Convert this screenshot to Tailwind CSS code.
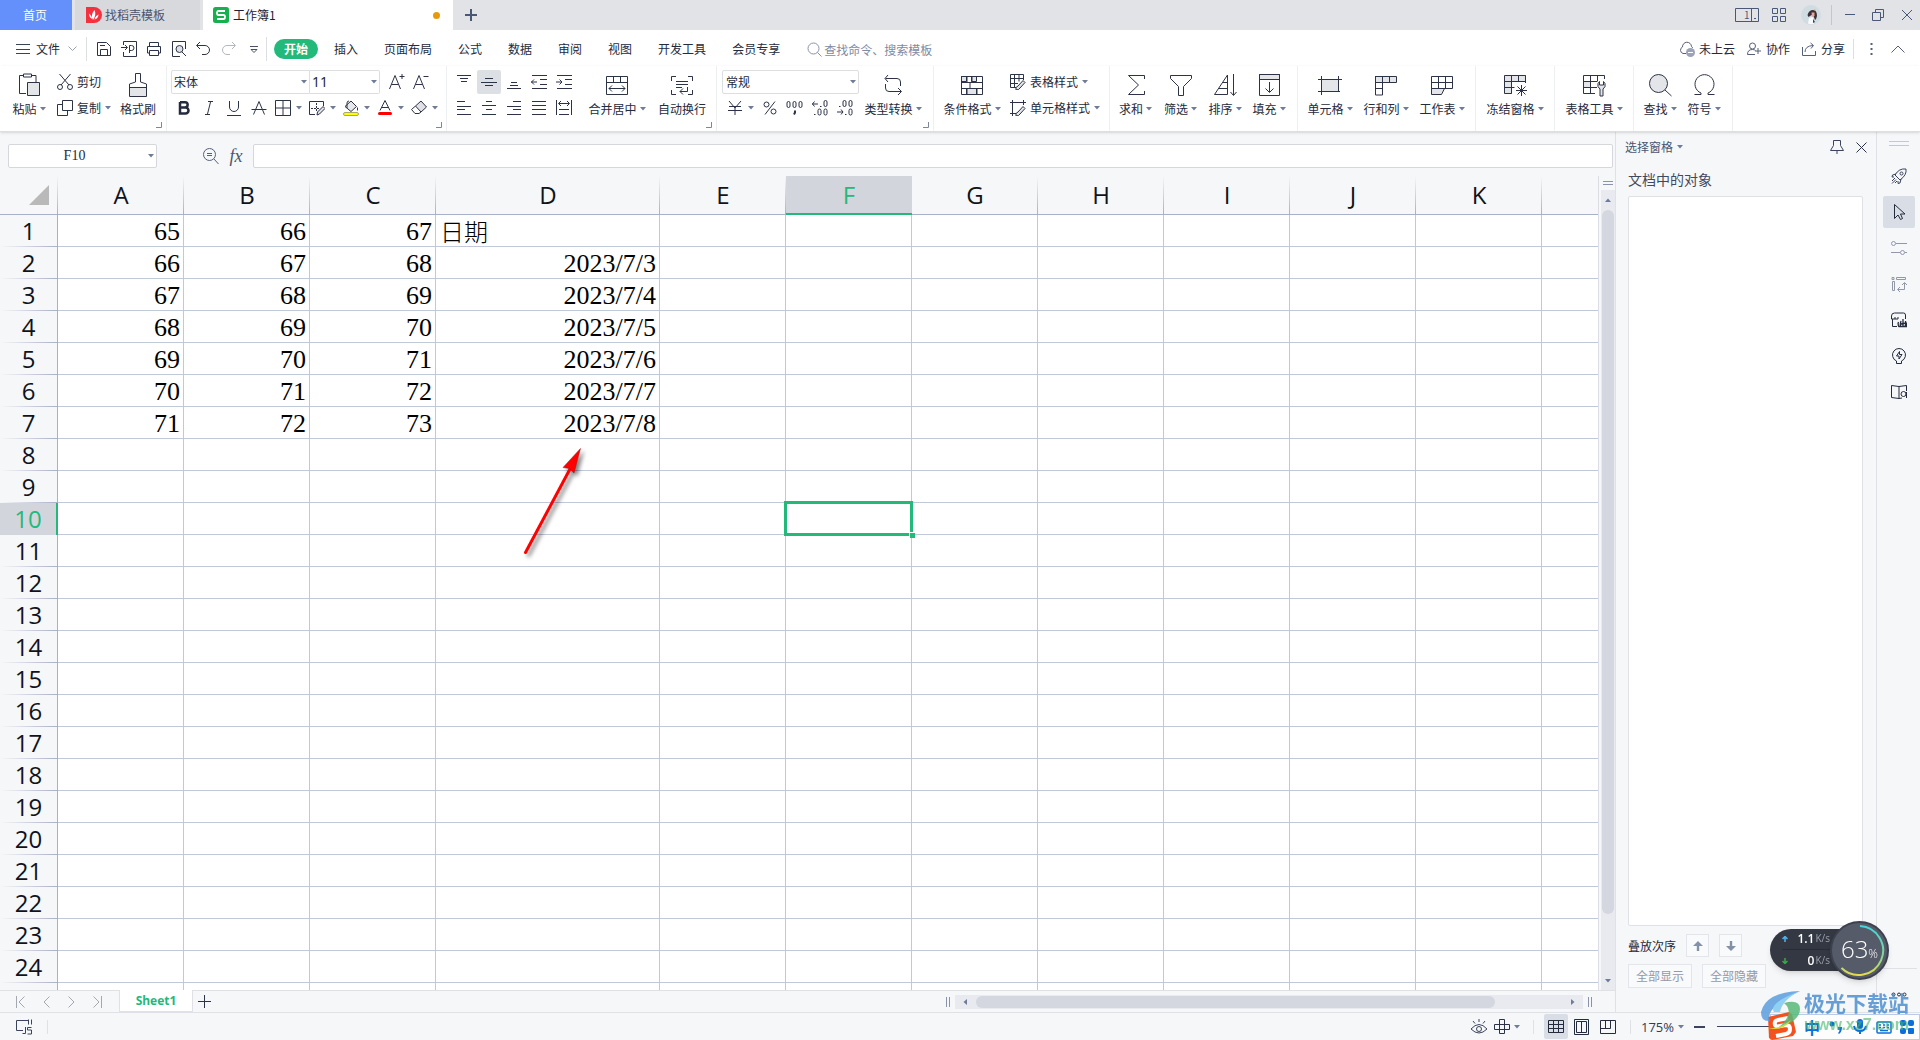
<!DOCTYPE html>
<html lang="zh-CN">
<head>
<meta charset="utf-8">
<title>工作簿1</title>
<script src="https://cdn.jsdelivr.net/npm/@tailwindcss/browser@4"></script>
</head>
<body class="h-screen flex flex-col overflow-hidden bg-[#f6f7f9] text-[#242b3d] text-xs leading-4 font-['Noto_Sans_CJK_SC',sans-serif]">

<svg class="hidden">
  <symbol id="caret" viewBox="0 0 6 4"><path d="M0 0h6L3 3.5z" fill="#6f7c98"/></symbol>
  <symbol id="corner" viewBox="0 0 6 6"><path d="M5.500 0v5.500H0" fill="none" stroke="#7d869c"/></symbol>
</svg>

<!-- Title bar -->
<header class="h-[30px] shrink-0 flex bg-[#e2e3e7] text-[#4a5570]">
  <button class="w-[72px] pr-[2px] bg-[#6390fb] text-white">首页</button>
  <button class="w-[125px] ml-[3px] pl-[11px] bg-[#d8d9dd] flex items-center gap-[3px]">
    <svg class="size-4" viewBox="0 0 16 16"><path d="M0 0h8a8 8 0 0 1 0 16H0z" fill="#f5303f"/><path d="M7 13C5 9 6 6 8.500 3c1.500 3 1 7-1.500 10zM6 12C4 11 3 9 3 6.500 5 8 6 10 6 12zM8.500 12.500c.5-2.500 2-4 4-5 0 3-2 4.500-4 5z" fill="#fff"/></svg>
    找稻壳模板
  </button>
  <button class="w-[250px] ml-[3px] pl-[10px] pr-[13px] bg-white flex items-center gap-1 text-[#1c2233]">
    <svg class="size-4" viewBox="0 0 16 16"><rect width="16" height="16" rx="2.500" fill="#17b04f"/><path d="M12 4H5.500Q4 4 4 6t1.500 2h5q1.500 0 1.500 2t-1.500 2H4" fill="none" stroke="#fff" stroke-width="1.800"/></svg>
    工作簿1
    <span class="ml-auto size-[7px] rounded-full bg-[#e69a0b]"></span>
  </button>
  <button class="w-9 flex items-center justify-center" aria-label="新建"><svg class="size-3" viewBox="0 0 12 12"><path d="M6 0v12M0 6h12" stroke="#4a5878" stroke-width="2"/></svg></button>
  <div class="ml-auto flex items-center pr-[7px]">
    <svg class="w-6 h-[14px]" viewBox="0 0 24 14" fill="none" stroke="#4a5878"><path d="M.5.500h23v13H.500zM16.500.500v13"/><path d="M19 10.500h2"/><text x="9" y="11" font-size="10" fill="#4a5878" stroke="none">1</text></svg>
    <svg class="size-[14px] ml-[13px]" viewBox="0 0 14 14" fill="none" stroke="#4a5878"><path d="M.5.500h5v5h-5zM8.500.500h5v5h-5zM.5 8.500h5v5h-5zM8.500 8.500h5v5h-5z"/></svg>
    <svg class="size-5 ml-[15px]" viewBox="0 0 20 20"><circle cx="10" cy="10" r="10" fill="#cfdde2"/><path d="M6.500 10q1.500-5 5.500-5 4 0 4 6-.5 3-2 4l-1.500-4-2-1-3 2z" fill="#3d3038"/><path d="M10.500 7.500h3V11l-2.500 1z" fill="#e2a79d"/><path d="M13 4.500l2 1" stroke="#e8b650"/><path d="M8 13l4-1 1 6.500q-3 1.500-6 0z" fill="#f7f9fb"/><path d="M12 14l2 3-2 1z" fill="#3d3c58"/></svg>
    <span class="w-px h-5 bg-[#c3c6cf] ml-[10px]"></span>
    <svg class="size-3 ml-3" viewBox="0 0 12 12"><path d="M1 5.500h10" stroke="#4a5878"/></svg>
    <svg class="size-3 ml-4" viewBox="0 0 12 12" fill="none" stroke="#4a5878"><path d="M.5 3.500h8v8h-8zM3.500 3V.500h8v8H9"/></svg>
    <svg class="size-3 ml-[17px]" viewBox="0 0 12 12"><path d="M1 1l10 10M11 1L1 11" stroke="#4a5878"/></svg>
  </div>
</header>

<!-- Menu bar -->
<nav class="h-9 shrink-0 pt-[2px] flex items-center bg-white pl-4 pr-[15px]">
  <svg class="w-[14px] h-[10px]" viewBox="0 0 14 10"><path d="M0 .500h14M0 5.500h14M0 9.500h14" stroke="#3c4356"/></svg>
  <button class="ml-[6px] flex items-center gap-2">文件 <svg class="w-[9px] h-[6px]" viewBox="0 0 9 6"><path d="M.5.500l4 4 4-4" fill="none" stroke="#9aa0ae"/></svg></button>
  <span class="w-px h-6 bg-[#dcdee3] ml-[9px]"></span>
  <div class="flex items-center pl-[9px] gap-[9px]">
    <svg class="size-4" viewBox="0 0 16 16" fill="none" stroke="#2c3346"><path d="M1.500 1.500h9l4 4v9h-13zM4.500 14V8.500h7V14M4 4.500h5"/></svg>
    <svg class="size-4" viewBox="0 0 16 16" fill="none" stroke="#2c3346"><path d="M2.500 4V.500h13v15h-13V11M0 6.500h6M4 4l2.500 2.500L4 9M8.500 12V4.500h2a2.500 2.500 0 0 1 0 5h-2"/></svg>
    <svg class="size-4" viewBox="0 0 16 16" fill="none" stroke="#2c3346"><path d="M3.500 5V1.500h9V5M3.500 12h-2V5.500h13V12h-2M3.500 9.500h9v5h-9z"/></svg>
    <svg class="size-4" viewBox="0 0 16 16" fill="none" stroke="#2c3346"><path d="M9 15.500H1.500V.500h13V8"/><circle cx="8.500" cy="8" r="3.500" fill="#dfe1e6"/><path d="M11 11l4 4"/></svg>
    <svg class="size-4" viewBox="0 0 16 16" fill="none" stroke="#2c3346"><path d="M4 1L.500 4.500 4 8M1 4.500h8a4.500 4.500 0 0 1 0 9H6"/></svg>
    <svg class="size-4" viewBox="0 0 16 16" fill="none" stroke="#b3b7c0"><path d="M11 1l3.500 3.500L11 8M14 4.500H6a4.500 4.500 0 0 0 0 9h3"/></svg>
    <svg class="size-4" viewBox="0 0 16 16" fill="none" stroke="#4a5265"><path d="M4 5.500h8M5 8.500l3 3 3-3z"/></svg>
  </div>
  <span class="w-px h-6 bg-[#dcdee3] ml-1"></span>
  <div class="flex items-center gap-[3px] ml-[7px]">
    <button class="h-5 w-11 rounded-full bg-[#22b97b] text-white font-bold">开始</button>
    <button class="px-[13px]">插入</button>
    <button class="pl-[10px] pr-[13px]">页面布局</button>
    <button class="px-[10px]">公式</button>
    <button class="px-[13px]">数据</button>
    <button class="px-[10px]">审阅</button>
    <button class="px-[13px]">视图</button>
    <button class="px-[10px]">开发工具</button>
    <button class="px-[13px]">会员专享</button>
  </div>
  <label class="flex items-center gap-[2px] ml-[14px]">
    <svg class="size-[15px]" viewBox="0 0 15 15" fill="none" stroke="#8a93a8"><circle cx="6.500" cy="6.500" r="5.500"/><path d="M10.500 10.500l4 4"/></svg>
    <input class="w-32 h-5 outline-none placeholder-[#7f8aa3]" placeholder="查找命令、搜索模板" aria-label="查找命令">
  </label>
  <div class="ml-auto flex items-center">
    <button class="flex items-center gap-1"><svg class="size-4" viewBox="0 0 16 16" fill="none" stroke="#56607a"><path d="M7 12.500H4A3.500 3.500 0 0 1 3.500 6a4.500 4.500 0 0 1 9-.5q1 .500 1 1.500"/><circle cx="11.500" cy="11.500" r="4.500" fill="#9aa3ba" stroke="none"/><path d="M9 11.500h5" stroke="#fff"/></svg>未上云</button>
    <button class="flex items-center gap-[5px] ml-3"><svg class="size-[14px]" viewBox="0 0 14 14" fill="none" stroke="#56607a"><circle cx="5.500" cy="4" r="3"/><path d="M8 12.500H.500q0-5 5-5 2 0 3 1M11 6v6M8 9h6"/></svg>协作</button>
    <button class="flex items-center gap-[5px] ml-3"><svg class="size-[14px]" viewBox="0 0 14 14" fill="none" stroke="#56607a"><path d="M.5 5v8.500h13V9M3 10q0-6 8-6.500M8.500 1L11.500 3.500 9 6.500"/></svg>分享</button>
    <span class="w-px h-5 bg-[#dcdee3] ml-2"></span>
    <svg class="w-[3px] h-3 ml-4" viewBox="0 0 3 12" fill="#56607a"><path d="M.5 0h2v2h-2zM.5 5h2v2h-2zM.5 10h2v2h-2z"/></svg>
    <svg class="w-[14px] h-2 ml-[18px]" viewBox="0 0 14 8"><path d="M.5 7.500L7 1l6.500 6.500" fill="none" stroke="#56607a"/></svg>
  </div>
</nav>

<!-- Ribbon -->
<section class="h-[66px] shrink-0 flex items-stretch bg-white border-b border-[#dcdee2] shadow-sm relative">
  <div class="w-[167px] relative border-r border-[#eeeff1] flex pt-[3px] pl-[11px]">
    <button class="w-9 pt-1 flex flex-col items-center gap-1">
      <svg class="size-6" viewBox="0 0 24 24" fill="none" stroke="#2c3346"><path d="M9 20.500H2.500v-18H6M15 2.500h4V9M6.500 1h8v3h-8z"/><path d="M10.500 9.500h12v13h-12z" fill="#e3e5e9"/></svg>
      <span class="flex items-center gap-[3px] whitespace-nowrap">粘贴<svg class="w-[6px] h-1"><use href="#caret"/></svg></span>
    </button>
    <div class="flex flex-col ml-[10px] w-[60px]">
      <button class="h-[26px] flex items-center gap-1"><svg class="size-4" viewBox="0 0 16 16" fill="none" stroke="#2c3346"><path d="M2.500 0L12 11M13.500 0L4 11"/><circle cx="3" cy="13" r="2.500"/><circle cx="13" cy="13" r="2.500"/></svg>剪切</button>
      <button class="h-[26px] flex items-center gap-1"><svg class="size-4" viewBox="0 0 16 16" fill="none" stroke="#2c3346"><path d="M5.500.500h10v10h-10zM5 4.500H.500v11h10V11"/></svg>复制<svg class="w-[6px] h-1"><use href="#caret"/></svg></button>
    </div>
    <button class="w-[42px] pt-1 flex flex-col items-center gap-1">
      <svg class="size-6" viewBox="0 0 24 24" fill="none" stroke="#2c3346"><path d="M3.500 14.500h17v9h-17z" fill="#e3e5e9"/><path d="M3.500 15v-4L9.500 9V.500h5V9l6 2v4"/></svg>格式刷</button>
    <svg class="absolute size-[6px] right-1 bottom-[3px]"><use href="#corner"/></svg>
  </div>

  <div class="w-[280px] relative border-r border-[#eeeff1] pt-[3px] pl-1">
    <div class="h-[26px] flex items-center">
      <label class="relative"><select aria-label="字体" class="appearance-none w-[139px] h-6 pl-[2px] bg-white border border-[#dcdee3] rounded-l-xs"><option>宋体</option></select><svg class="absolute right-[3px] top-[10px] w-[6px] h-1"><use href="#caret"/></svg></label>
      <label class="relative"><select aria-label="字号" class="appearance-none w-[70px] h-6 pl-[2px] bg-white border border-l-0 border-[#dcdee3] rounded-r-xs text-sm font-['Noto_Sans',sans-serif]"><option>11</option></select><svg class="absolute right-[3px] top-[10px] w-[6px] h-1"><use href="#caret"/></svg></label>
      <button class="w-6 ml-[5px] flex justify-center" aria-label="增大字号"><svg class="size-4" viewBox="0 0 16 16" fill="none" stroke="#2c3346"><path d="M.5 15L6 1.500 11.500 15M2.500 10.500h7M10.500 2.500h5M13 0v5"/></svg></button>
      <button class="w-6 flex justify-center" aria-label="减小字号"><svg class="size-4" viewBox="0 0 16 16" fill="none" stroke="#2c3346"><path d="M.5 15L6 1.500 11.500 15M2.500 10.500h7M10.500 2.500h5"/></svg></button>
    </div>
    <div class="h-[26px] flex items-center">
      <button class="w-[25px] flex justify-center" aria-label="加粗"><svg class="size-4" viewBox="0 0 16 16" fill="none" stroke="#242b3d" stroke-width="2.500"><path d="M4 2.200h5a2.600 2.600 0 0 1 0 5.300H4M4 7.500h5.500a3 3 0 0 1 0 6H4zM4 2v12"/></svg></button>
      <button class="w-[25px] flex justify-center" aria-label="倾斜"><svg class="size-4" viewBox="0 0 16 16" fill="none" stroke="#2c3346"><path d="M7 1.500h5M4 14.500h5M9.500 2l-3 12"/></svg></button>
      <button class="w-[25px] flex justify-center" aria-label="下划线"><svg class="size-4" viewBox="0 0 16 16" fill="none" stroke="#2c3346"><path d="M3.500 1v6a4.500 4.500 0 0 0 9 0V1M1 15.500h14"/></svg></button>
      <button class="w-[25px] flex justify-center" aria-label="删除线"><svg class="size-4" viewBox="0 0 16 16" fill="none" stroke="#2c3346"><path d="M2.500 14.500L8 1.500l5.500 13M.5 9.500h15"/></svg></button>
      <button class="w-[34px] flex items-center pl-1 gap-[5px]" aria-label="边框"><svg class="size-4" viewBox="0 0 16 16" fill="none" stroke="#2c3346"><path d="M.5.500h15v15H.500zM8 1v14M1 8h14"/></svg><svg class="w-[6px] h-1"><use href="#caret"/></svg></button>
      <button class="w-[34px] flex items-center pl-1 gap-[5px]" aria-label="绘图边框"><svg class="size-4" viewBox="0 0 16 16" fill="none" stroke="#2c3346"><path d="M6 14.500H.500V1.500h14V6"/><path d="M2 8.500h8M7.500 3v8" stroke-dasharray="2 1"/><path d="M8 15l.5-3L14 6.500l2 2L10.500 14z" fill="#dfe1e6"/></svg><svg class="w-[6px] h-1"><use href="#caret"/></svg></button>
      <button class="w-[34px] flex items-center pl-1 gap-[5px]" aria-label="填充颜色"><svg class="size-4" viewBox="0 0 16 16" fill="none" stroke="#2c3346"><path d="M2 6.500L8 1l5.500 5.500L8 11.500z" fill="#e6e8ec"/><path d="M4 8V3q0-2 2-2M14.500 7.500v3"/><rect x=".5" y="12.500" width="15" height="3" rx="1.500" fill="#ff0" stroke="#a8a86a"/></svg><svg class="w-[6px] h-1"><use href="#caret"/></svg></button>
      <button class="w-[34px] flex items-center pl-1 gap-[5px]" aria-label="字体颜色"><svg class="size-4" viewBox="0 0 16 16" fill="none" stroke="#2c3346"><path d="M3 10.500L8 .500l5 10M4.500 7.500h7"/><rect x="1" y="12" width="14" height="3" rx="1.500" fill="#f00" stroke="none"/></svg><svg class="w-[6px] h-1"><use href="#caret"/></svg></button>
      <button class="w-[34px] flex items-center pl-1 gap-[5px]" aria-label="清除"><svg class="size-4" viewBox="0 0 16 16" fill="none" stroke="#2c3346"><path d="M4.500 6L10 1l5.500 6L10 12z" fill="#dfe1e6"/><path d="M4.500 6L.500 9.500 4 13.500h4l2-1.500"/></svg><svg class="w-[6px] h-1"><use href="#caret"/></svg></button>
    </div>
    <svg class="absolute size-[6px] right-1 bottom-[3px]"><use href="#corner"/></svg>
  </div>

  <div class="w-[270px] relative border-r border-[#eeeff1] pt-[3px] pl-1 flex">
    <div class="grid grid-cols-[repeat(5,25px)] auto-rows-[26px] items-center justify-items-center content-start">
      <button aria-label="顶端对齐"><svg class="size-4" viewBox="0 0 16 16" stroke="#2c3346"><path d="M1 1.500h14M4 4.500h8M5 7.500h6"/></svg></button>
      <button aria-label="垂直居中" class="size-6 flex items-center justify-center bg-[#dce0e5] rounded-xs"><svg class="size-4" viewBox="0 0 16 16" stroke="#2c3346"><path d="M4 4.500h8M0 8.500h16M4 11.500h8"/></svg></button>
      <button aria-label="底端对齐"><svg class="size-4" viewBox="0 0 16 16" stroke="#2c3346"><path d="M5 8.500h6M4 11.500h8M1 14.500h14"/></svg></button>
      <button aria-label="减少缩进"><svg class="size-4" viewBox="0 0 16 16" fill="none" stroke="#2c3346"><path d="M1 1.500h15M9 5.500h7M9 10.500h7M1 14.500h15M0 8h6M3 5.500L.500 8 3 10.500"/></svg></button>
      <button aria-label="增加缩进"><svg class="size-4" viewBox="0 0 16 16" fill="none" stroke="#2c3346"><path d="M1 1.500h15M9 5.500h7M9 10.500h7M1 14.500h15M0 8h6M3.500 5.500L6 8l-2.500 2.500"/></svg></button>
      <button aria-label="左对齐"><svg class="size-4" viewBox="0 0 16 16" stroke="#2c3346"><path d="M1 1.500h8M1 6.500h14M1 9.500h8M1 14.500h14"/></svg></button>
      <button aria-label="居中"><svg class="size-4" viewBox="0 0 16 16" stroke="#2c3346"><path d="M5 1.500h6M1 5.500h14M5 9.500h6M1 14.500h14"/></svg></button>
      <button aria-label="右对齐"><svg class="size-4" viewBox="0 0 16 16" stroke="#2c3346"><path d="M7 1.500h8M1 6.500h14M7 9.500h8M1 14.500h14"/></svg></button>
      <button aria-label="两端对齐"><svg class="size-4" viewBox="0 0 16 16" stroke="#2c3346"><path d="M1 1.500h14M1 5.500h14M1 9.500h14M1 14.500h14"/></svg></button>
      <button aria-label="分散对齐"><svg class="size-4" viewBox="0 0 16 16" fill="none" stroke="#2c3346"><path d="M.5 0v15M15.500 0v15M3 9.500h10M3 14.500h10M3 3.500h10M5 1L2.500 3.500 5 6M11 1l2.500 2.500L11 6"/></svg></button>
    </div>
    <button class="w-[70px] ml-[6px] pt-1 flex flex-col items-center gap-1">
      <svg class="size-6" viewBox="0 0 24 24" fill="none" stroke="#2c3346"><path d="M1.500 3.500h21v18h-21zM1 9.500h22M8.500 3v6M15.500 3v6M4 15.500h16M7 12.500l-3 3 3 3M17 12.500l3 3-3 3"/></svg>
      <span class="flex items-center gap-[3px] whitespace-nowrap">合并居中<svg class="w-[6px] h-1"><use href="#caret"/></svg></span></button>
    <button class="w-[60px] pt-1 flex flex-col items-center gap-1">
      <svg class="size-6" viewBox="0 0 24 24" fill="none" stroke="#2c3346"><path d="M6 3.500H1.500V8M18 3.500h4.500V8M6 21.500H1.500V17M18 21.500h4.500V17M6 8.500h12M6 11.500h12M6 14.500h6M17.500 14v4.500H10M13 15.500l-3 3 3 3"/></svg>自动换行</button>
    <svg class="absolute size-[6px] right-1 bottom-[3px]"><use href="#corner"/></svg>
  </div>

  <div class="w-[217px] relative border-r border-[#eeeff1] pt-[3px] pl-[5px] flex">
    <div class="w-[137px]">
      <div class="h-[26px] flex items-center"><label class="relative"><select aria-label="数字格式" class="appearance-none w-[137px] h-6 pl-[3px] bg-white border border-[#dcdee3] rounded-xs"><option>常规</option></select><svg class="absolute right-[3px] top-[10px] w-[6px] h-1"><use href="#caret"/></svg></label></div>
      <div class="h-[26px] flex items-center">
        <button class="w-[35px] pl-[5px] flex items-center gap-[5px]" aria-label="货币"><svg class="size-4" viewBox="0 0 16 16" fill="none" stroke="#2c3346"><path d="M2 1l6 7 6-7M8 8v7M2 6.500h12M1 10.500h14"/></svg><svg class="w-[6px] h-1"><use href="#caret"/></svg></button>
        <button class="w-[25px] flex justify-center" aria-label="百分比"><svg class="size-4" viewBox="0 0 16 16" fill="none" stroke="#2c3346"><path d="M13 1.500L3 14.500"/><circle cx="4.500" cy="4.500" r="2.500"/><circle cx="11.500" cy="11.500" r="2.500"/></svg></button>
        <button class="w-[25px] flex justify-center" aria-label="千位分隔"><svg class="w-[18px] h-4" viewBox="0 0 18 16" fill="none" stroke="#2c3346"><rect x="1" y="1.500" width="3" height="6" rx="1.500"/><rect x="7" y="1.500" width="3" height="6" rx="1.500"/><rect x="13" y="1.500" width="3" height="6" rx="1.500"/><path d="M9 10.500v2l-1 2" stroke-width="2"/></svg></button>
        <button class="w-[25px] flex justify-center" aria-label="增加小数位"><svg class="size-4" viewBox="0 0 16 16" fill="none" stroke="#2c3346"><path d="M0 4h6M2.500 1.500L.500 4l2 2.500M8 6.500h1.500M2 14.500h1.500"/><rect x="12" y=".5" width="3" height="6" rx="1.500"/><rect x="6" y="9" width="3" height="6" rx="1.500"/><rect x="12" y="9" width="3" height="6" rx="1.500"/></svg></button>
        <button class="w-[25px] flex justify-center" aria-label="减少小数位"><svg class="size-4" viewBox="0 0 16 16" fill="none" stroke="#2c3346"><path d="M0 12h6M4 9.500L6 12l-2 2.500M8 14.500h1.500M2 6.500h1.500"/><rect x="12" y="9" width="3" height="6" rx="1.500"/><rect x="6" y=".5" width="3" height="6" rx="1.500"/><rect x="12" y=".5" width="3" height="6" rx="1.500"/></svg></button>
      </div>
    </div>
    <button class="w-[68px] pt-1 flex flex-col items-center gap-1">
      <svg class="size-6" viewBox="0 0 24 24" fill="none" stroke="#2c3346"><path d="M7 2L4 5.500 7 9M4.500 5.500H16a3.500 3.500 0 0 1 3.500 3.500v4M17 15l3.500 3.500L17 22M20 18.500H8A3.500 3.500 0 0 1 4.500 15v-4"/></svg>
      <span class="flex items-center gap-[3px] whitespace-nowrap">类型转换<svg class="w-[6px] h-1"><use href="#caret"/></svg></span></button>
    <svg class="absolute size-[6px] right-1 bottom-[3px]"><use href="#corner"/></svg>
  </div>

  <div class="w-[176px] border-r border-[#eeeff1] pt-[3px] pl-1 flex">
    <button class="w-[68px] pt-1 flex flex-col items-center gap-1">
      <svg class="size-6" viewBox="0 0 24 24" fill="none" stroke="#2c3346"><path d="M1.500 3.500h5v5h-5zM11.500 3.500h5v5h-5zM6.500 15.500h10v6h-10z" fill="#e3e5e9"/><path d="M1.500 3.500h21v18h-21zM1 9.500h22M1 15.500h22M7 3v6M12 3v6M10 9.500v6M7 15v6M17 15v6"/></svg>
      <span class="flex items-center gap-[3px] whitespace-nowrap">条件格式<svg class="w-[6px] h-1"><use href="#caret"/></svg></span></button>
    <div class="ml-1">
      <button class="h-[26px] flex items-center gap-1"><svg class="size-4" viewBox="0 0 16 16" fill="none" stroke="#2c3346"><path d="M6 13.500H.500V.500h13V6M.5 4.500h13M.5 9.500H8M4.500.500v13M9 .500v7"/><path d="M6 16q-1-3 2-4l5-5.500 2 2-5 5.500q-1 2-4 2z" fill="#e3e5e9"/></svg>表格样式<svg class="w-[6px] h-1"><use href="#caret"/></svg></button>
      <button class="h-[26px] flex items-center gap-1"><svg class="size-4" viewBox="0 0 16 16" fill="none" stroke="#2c3346"><path d="M0 2.500h16M2.500 0v16M13.500 0v5M0 13.500h6"/><path d="M6 16q-1-3 2-4l5-5.500 2 2-5 5.500q-1 2-4 2z" fill="#e3e5e9"/></svg>单元格样式<svg class="w-[6px] h-1"><use href="#caret"/></svg></button>
    </div>
  </div>

  <div class="w-[188px] border-r border-[#eeeff1] pt-[3px] pl-[3px] flex">
    <button class="w-[45px] pt-1 flex flex-col items-center gap-1">
      <svg class="size-6" viewBox="0 0 24 24" fill="none" stroke="#2c3346"><path d="M20.500 6V2.500h-16l10 9.500-10 9.500h16V18"/></svg>
      <span class="flex items-center gap-[3px] whitespace-nowrap">求和<svg class="w-[6px] h-1"><use href="#caret"/></svg></span></button>
    <button class="w-[45px] pt-1 flex flex-col items-center gap-1">
      <svg class="size-6" viewBox="0 0 24 24" fill="none" stroke="#2c3346"><path d="M1.500 2.500h21v3l-8 8v9h-5v-9l-8-8z"/></svg>
      <span class="flex items-center gap-[3px] whitespace-nowrap">筛选<svg class="w-[6px] h-1"><use href="#caret"/></svg></span></button>
    <button class="w-11 pt-1 flex flex-col items-center gap-1">
      <svg class="size-6" viewBox="0 0 24 24" fill="none" stroke="#2c3346"><path d="M1.500 21.500L14.500 2v19.500zM6 15.500h8.500M10 9.500h4.500M20.500 1v21M17.500 19l3 3.500 3-3.500"/></svg>
      <span class="flex items-center gap-[3px] whitespace-nowrap">排序<svg class="w-[6px] h-1"><use href="#caret"/></svg></span></button>
    <button class="w-11 pt-1 flex flex-col items-center gap-1">
      <svg class="size-6" viewBox="0 0 24 24" fill="none" stroke="#2c3346"><path d="M2.500 1.500h20v5h-20z" fill="#e3e5e9"/><path d="M2.500 1.500h20v21h-20zM12.500 9v10M8.500 15.500l4 4 4-4"/></svg>
      <span class="flex items-center gap-[3px] whitespace-nowrap">填充<svg class="w-[6px] h-1"><use href="#caret"/></svg></span></button>
  </div>

  <div class="w-[178px] border-r border-[#eeeff1] pt-[3px] pl-1 flex">
    <button class="w-14 pt-1 flex flex-col items-center gap-1">
      <svg class="size-6" viewBox="0 0 24 24" fill="none" stroke="#2c3346"><path d="M3.500 6.500h17v12h-17z" fill="#e3e5e9"/><path d="M0 6.500h24M0 18.500h19M3.500 3v19M20.500 3v13M20 18.500h2"/></svg>
      <span class="flex items-center gap-[3px] whitespace-nowrap">单元格<svg class="w-[6px] h-1"><use href="#caret"/></svg></span></button>
    <button class="w-14 pt-1 flex flex-col items-center gap-1">
      <svg class="size-6" viewBox="0 0 24 24" fill="none" stroke="#2c3346"><path d="M1.500 3.500h21v6h-21z" fill="#e3e5e9"/><path d="M8.500 3v19h-7V3M15.500 3v6M1.500 9.500h7M1.500 15.500h7"/></svg>
      <span class="flex items-center gap-[3px] whitespace-nowrap">行和列<svg class="w-[6px] h-1"><use href="#caret"/></svg></span></button>
    <button class="w-14 pt-1 flex flex-col items-center gap-1">
      <svg class="size-6" viewBox="0 0 24 24" fill="none" stroke="#2c3346"><path d="M1.500 15.500h13l-3 6h-10z" fill="#e3e5e9"/><path d="M1.500 3.500h21v12h-21zM1 9.500h22M8.500 3v12M15.500 3v12"/></svg>
      <span class="flex items-center gap-[3px] whitespace-nowrap">工作表<svg class="w-[6px] h-1"><use href="#caret"/></svg></span></button>
  </div>

  <div class="w-[79px] border-r border-[#eeeff1] pt-[3px] flex justify-center">
    <button class="pt-1 flex flex-col items-center gap-1">
      <svg class="size-6" viewBox="0 0 24 24" fill="none" stroke="#2c3346"><path d="M1.500 2.500h21v6h-14v12h-7z" fill="#e3e5e9"/><path d="M22.500 10V2.500M1.500 8.500h21M1.500 14.500h10M8.500 2.500v18M15.500 2.500v6M18.500 12v11M13 17.500h11M14.500 13.500l8 8M22.500 13.500l-8 8"/></svg>
      <span class="flex items-center gap-[3px] whitespace-nowrap">冻结窗格<svg class="w-[6px] h-1"><use href="#caret"/></svg></span></button>
  </div>
  <div class="w-[79px] border-r border-[#eeeff1] pt-[3px] flex justify-center">
    <button class="pt-1 flex flex-col items-center gap-1">
      <svg class="size-6" viewBox="0 0 24 24" fill="none" stroke="#2c3346"><path d="M1.500 8.500h7v6h-7z" fill="#e3e5e9"/><path d="M13 20.500H1.500v-18h21V6M1.500 8.500H15M1.500 14.500H15M8.500 2.500v18M15.500 2.500v6"/><path d="M18 23v-7q-3-2-2-5.500l1.500-2V12h4V8.500l1.500 2q1 3.500-2 5.500v7z" fill="#e3e5e9"/></svg>
      <span class="flex items-center gap-[3px] whitespace-nowrap">表格工具<svg class="w-[6px] h-1"><use href="#caret"/></svg></span></button>
  </div>
  <div class="w-[99px] border-r border-[#eeeff1] pt-[3px] pl-1 flex">
    <button class="w-11 pt-1 flex flex-col items-center gap-1">
      <svg class="size-6" viewBox="0 0 24 24" fill="none" stroke="#2c3346"><circle cx="10.500" cy="10.500" r="9" fill="#e3e5e9"/><path d="M17 17l6.500 6"/></svg>
      <span class="flex items-center gap-[3px] whitespace-nowrap">查找<svg class="w-[6px] h-1"><use href="#caret"/></svg></span></button>
    <button class="w-11 pt-1 flex flex-col items-center gap-1">
      <svg class="size-6" viewBox="0 0 24 24" fill="none" stroke="#2c3346"><path d="M2.500 21.500H9V20a9.500 9.500 0 1 1 7 0v1.500h6.500"/></svg>
      <span class="flex items-center gap-[3px] whitespace-nowrap">符号<svg class="w-[6px] h-1"><use href="#caret"/></svg></span></button>
  </div>
</section>

<!-- Workspace -->
<div class="flex-1 min-h-0 flex">
  <main class="flex-1 min-w-0 flex flex-col">
    <div class="h-11 shrink-0 flex items-start pt-3 pl-2 pr-[2px]">
      <label class="relative"><input aria-label="名称框" value="F10" class="w-[149px] h-6 bg-white border border-[#d5d7dd] rounded-xs text-center pr-4 text-sm font-['Liberation_Serif',serif]"><svg class="absolute right-[3px] top-[10px] w-[6px] h-1"><use href="#caret"/></svg></label>
      <svg class="size-[18px] ml-[45px] mt-[3px]" viewBox="0 0 18 18" fill="none" stroke="#56607a"><circle cx="7.500" cy="7.500" r="6"/><path d="M12 12l4.500 5M5 6.500h5M5 8.500h5"/></svg>
      <button class="ml-[6px] w-5 h-6 text-lg leading-6 italic text-[#4a5570] font-['Liberation_Serif',serif]" aria-label="插入函数">fx</button>
      <input aria-label="编辑栏" class="flex-1 min-w-0 ml-[7px] h-6 bg-white border border-[#d5d7dd] rounded-xs">
    </div>
    <div class="flex-1 min-h-0 flex">
      <div class="flex-1 min-w-0 overflow-hidden relative border-r border-[#dcdee3]">
        <table id="sheet" class="table-fixed border-separate border-spacing-0 w-[1668px]"></table>
        <svg class="absolute left-[515px] top-[264px] w-20 h-[124px] drop-shadow-[3px_3px_2px_rgba(0,0,0,0.5)]" viewBox="0 0 80 124"><path d="M10.500 112.500L55 29" stroke="#f00" stroke-width="3" stroke-linecap="round"/><path d="M65.500 8.500L48 27.500l6.500 1 4.500 4.500z" fill="#f00" stroke="#a11" stroke-width=".5"/></svg>
      </div>
      <div class="w-[14px] ml-[2px] flex flex-col items-center">
        <div class="h-[14px] w-full flex items-center justify-center"><svg class="w-[10px] h-1" viewBox="0 0 10 4"><path d="M0 .500h10M0 3.500h10" stroke="#8a93ab"/></svg></div>
        <div class="flex-1 w-full bg-[#e9eaf0] flex flex-col items-center pb-[7px]">
          <svg class="w-[6px] h-1 mt-2 rotate-180"><use href="#caret"/></svg>
          <div class="w-3 mt-2 h-[704px] rounded-full bg-[#d4d7e0]"></div>
          <svg class="w-[6px] h-1 mt-auto"><use href="#caret"/></svg>
        </div>
      </div>
    </div>
    <!-- Sheet tabs -->
    <div class="h-[22px] shrink-0 flex items-stretch border-t border-[#dfe1e6]">
      <div class="flex items-center pl-4 w-[119px] gap-[18px]">
        <svg class="w-[9px] h-3" viewBox="0 0 9 12" fill="none" stroke="#a5a8b0"><path d="M.5 0v12M8.500.500L3 6l5.500 5.500"/></svg>
        <svg class="w-[7px] h-3" viewBox="0 0 7 12" fill="none" stroke="#a5a8b0"><path d="M6.500.500L1 6l5.500 5.500"/></svg>
        <svg class="w-[7px] h-3" viewBox="0 0 7 12" fill="none" stroke="#a5a8b0"><path d="M.5.500L6 6 .500 11.500"/></svg>
        <svg class="w-[9px] h-3" viewBox="0 0 9 12" fill="none" stroke="#a5a8b0"><path d="M8.500 0v12M.5.500L6 6 .500 11.500"/></svg>
      </div>
      <button class="w-[74px] -mt-px bg-white border-x border-b border-[#dfe1e6] text-[#22b97b] font-bold font-['Open_Sans',sans-serif]">Sheet1</button>
      <button class="w-[22px] flex items-center justify-center" aria-label="新建工作表"><svg class="size-[13px]" viewBox="0 0 13 13"><path d="M6.500 0v13M0 6.500h13" stroke="#2c3346"/></svg></button>
      <div class="ml-auto flex items-center pr-[23px]">
        <svg class="w-1 h-[10px]" viewBox="0 0 4 10"><path d="M.5 0v10M3.500 0v10" stroke="#8a93ab"/></svg>
        <div class="w-[628px] h-[14px] ml-[5px] bg-[#e9eaf0] flex items-center px-[7px]">
          <svg class="w-[6px] h-1 rotate-90"><use href="#caret"/></svg>
          <div class="w-[519px] ml-2 h-3 rounded-full bg-[#d4d7e0]"></div>
          <svg class="w-[6px] h-1 ml-auto -rotate-90"><use href="#caret"/></svg>
        </div>
        <svg class="w-1 h-[10px] ml-[5px]" viewBox="0 0 4 10"><path d="M.5 0v10M3.500 0v10" stroke="#8a93ab"/></svg>
      </div>
    </div>
  </main>

  <!-- Selection pane -->
  <aside class="w-[262px] border-x border-[#dfe1e6] pl-3 pr-[13px] flex flex-col">
    <div class="h-[30px] flex items-center text-[#4a5570] -ml-[3px]">
      <button class="flex items-center gap-1">选择窗格<svg class="w-[6px] h-1"><use href="#caret"/></svg></button>
      <button class="ml-auto" aria-label="固定"><svg class="size-[14px]" viewBox="0 0 14 14" fill="none" stroke="#3b445c"><path d="M3.500.500h7v5l3 5H.500l3-5zM7 11v3"/></svg></button>
      <button class="ml-3 -mr-1" aria-label="关闭"><svg class="size-[11px]" viewBox="0 0 11 11"><path d="M.5.500l10 10M10.500.500l-10 10" stroke="#2c3346"/></svg></button>
    </div>
    <h2 class="h-[34px] pt-[7px] text-sm leading-5 text-[#3f4960]">文档中的对象</h2>
    <div class="flex-1 bg-white border border-[#dfe1e6] rounded-xs"></div>
    <div class="h-[86px] pt-2">
      <div class="flex items-center">
        叠放次序
        <button class="ml-[10px] size-[23px] border border-[#e3e5ea] bg-[#f9fafb] flex items-center justify-center" aria-label="上移"><svg class="size-[10px]" viewBox="0 0 10 10"><path d="M5 0l5 5H6.200v5H3.800V5H0z" fill="#8490a8"/></svg></button>
        <button class="ml-[10px] size-[23px] border border-[#e3e5ea] bg-[#f9fafb] flex items-center justify-center" aria-label="下移"><svg class="size-[10px]" viewBox="0 0 10 10"><path d="M5 10l5-5H6.200V0H3.800v5H0z" fill="#8490a8"/></svg></button>
      </div>
      <div class="flex gap-[10px] mt-[7px] text-[#9299a8]">
        <button class="w-16 h-6 border border-[#e3e5ea] bg-[#f9fafb]">全部显示</button>
        <button class="w-16 h-6 border border-[#e3e5ea] bg-[#f9fafb]">全部隐藏</button>
      </div>
    </div>
  </aside>

  <!-- Side toolbar -->
  <aside class="w-[43px] flex flex-col items-center pt-[9px] pb-3">
    <svg class="w-5 h-[5px]" viewBox="0 0 20 5"><path d="M0 .500h20M0 4.500h20" stroke="#c4c8d1"/></svg>
    <div class="flex flex-col items-center gap-1 mt-[14px]">
      <button class="size-8 flex items-center justify-center" aria-label="快捷"><svg class="size-4" viewBox="0 0 16 16" fill="none" stroke="#3b445c"><path d="M4 7Q8 0 15 1q1 6-6 11L4 7zM5 6L1.500 7 1 9h2M10 11l-1 4-2 .500V13M1 13l3-3M1 15.500l4-4M4 15l2-2"/><circle cx="10.500" cy="5.500" r="1.500"/></svg></button>
      <button class="size-8 flex items-center justify-center bg-[#d9dde6] rounded-xs" aria-label="选择"><svg class="size-4" viewBox="0 0 16 16" fill="none" stroke="#242b3d"><path d="M3.500.500v14L7 11l2.500 4.500 2-1-2-4.500h4.500z"/></svg></button>
      <button class="size-8 flex items-center justify-center" aria-label="属性"><svg class="size-4" viewBox="0 0 16 16" fill="none" stroke="#9298a8"><circle cx="2.500" cy="3.500" r="2"/><path d="M5 3.500h11M0 12.500h9M14 12.500h2"/><circle cx="11.500" cy="12.500" r="2"/></svg></button>
      <button class="size-8 flex items-center justify-center" aria-label="布局"><svg class="size-4" viewBox="0 0 16 16" fill="none" stroke="#9298a8"><path d="M1 1.500h2v2H1zM5.500 1.500h9v2h-9zM1.500 5.500h2v9h-2zM7 13.500h6.500V7M9 11l-2.500 2.500L9 16M11 9l2.500-2.500L16 9"/></svg></button>
      <button class="size-8 flex items-center justify-center" aria-label="资源"><svg class="size-4" viewBox="0 0 16 16" fill="none" stroke="#242b3d"><path d="M6 14.500H1.500V7M14.500 7V3q0-2-2-2h-9q-3 0-3 3v3h3.500V5M4 7h3V5"/><path d="M8 15q-1.500-3-.5-5M12 15V7M9.500 15q-.5-3 .5-6M14 15q1-3 .5-6M8 14.500h7.500v-4M10 12l5-1" stroke-width="1.300"/></svg></button>
      <button class="size-8 flex items-center justify-center" aria-label="建议"><svg class="size-4" viewBox="0 0 16 16" fill="none" stroke="#242b3d"><path d="M5.500 13a6.500 6.500 0 1 1 5 0v2.500h-5zM8.500 3.500L5.500 8H8v3l3-4.500H8.500z"/></svg></button>
      <button class="size-8 flex items-center justify-center" aria-label="帮助"><svg class="size-4" viewBox="0 0 16 16" fill="none" stroke="#242b3d"><path d="M8 2.500v12l-7.500-1v-12zl7.500-1V7M8 14.500l3-.5"/><circle cx="12.500" cy="10" r="2.500"/><path d="M15.500 8v6"/></svg></button>
    </div>
    <div class="mt-auto w-[37px] h-px bg-[#dfe1e6]"></div>
    <svg class="w-4 h-[5px] mt-[23px] mb-[3px]" viewBox="0 0 16 5" fill="none" stroke="#242b3d"><circle cx="2.500" cy="2.500" r="1.500"/><circle cx="8" cy="2.500" r="1.500"/><circle cx="13.500" cy="2.500" r="1.500"/></svg>
  </aside>
</div>

<!-- Status bar -->
<footer class="h-7 shrink-0 flex items-center border-t border-[#dfe1e6]">
  <svg class="size-4 ml-4" viewBox="0 0 16 16" fill="none" stroke="#3b445c"><path d="M7 11.500H.500V1.500h12M12.500.500v5M15.500.500v5M9.500 8v6.500H6.500M15.500 8.500h-4V11h4v4h-4"/></svg>
  <span class="w-px h-[14px] ml-[15px] bg-[#dfe1e6]"></span>
  <div class="ml-auto flex items-center w-[449px]">
    <svg class="size-4" viewBox="0 0 16 16" fill="none" stroke="#3b445c"><path d="M0 10q8-9 16 0-8 8-16 0zM8 0v3M2 2l2 2.500M14 2l-2 2.500"/><circle cx="8" cy="10" r="2.500"/></svg>
    <svg class="size-4 ml-[7px]" viewBox="0 0 16 16" fill="none" stroke="#2c3346"><path d="M5.500.500h5v14h-5zM.5 5.500h15v5H.500z"/></svg>
    <svg class="w-[6px] h-1 ml-1"><use href="#caret"/></svg>
    <span class="w-px h-[14px] ml-[13px] bg-[#dfe1e6]"></span>
    <button class="w-6 h-[25px] ml-[10px] bg-[#d9dde6] rounded-xs flex items-center justify-center" aria-label="普通视图"><svg class="w-4 h-[13px]" viewBox="0 0 16 13" fill="none" stroke="#242b3d"><path d="M.5.500h15v12H.500zM0 4.500h16M0 8.500h16M5.500 0v13M10.500 0v13"/></svg></button>
    <button class="ml-[6px]" aria-label="页面布局"><svg class="w-[15px] h-4" viewBox="0 0 15 16" fill="none" stroke="#242b3d"><path d="M.5.500h14v15H.500zM2.500 2.500h10v11h-10zM7.500 2.500v11"/></svg></button>
    <button class="ml-[11px]" aria-label="分页预览"><svg class="w-4 h-[14px]" viewBox="0 0 16 14" fill="none" stroke="#242b3d"><path d="M.5.500h15v13H.500zM5.500 0v8.500M10.500 0v8.500M.5 8.500h10"/></svg></button>
    <span class="w-px h-[14px] ml-[14px] bg-[#dfe1e6]"></span>
    <button class="ml-[10px] flex items-center gap-1 text-[13px] text-[#2f3a55] font-['Open_Sans',sans-serif]">175%<svg class="w-[6px] h-1"><use href="#caret"/></svg></button>
    <span class="w-[11px] h-[2px] ml-[10px] bg-[#3b445c]"></span>
    <span class="flex-1 h-px ml-3 bg-[#3b445c]"></span>
  </div>
</footer>

<!-- Network speed bubble -->
<div class="fixed right-[31px] bottom-[61px] w-[119px] h-[58px] flex items-center">
  <div class="w-20 h-[42px] rounded-l-full bg-[#343842] text-white shadow-md pl-3 pr-5 grid grid-rows-2 items-center">
    <div class="flex items-center border-b border-[#292d36] h-full text-xs font-['Open_Sans',sans-serif]"><svg class="size-[6px] shrink-0" viewBox="0 0 6 6" fill="none" stroke="#4db4ee" stroke-width="1.500"><path d="M3 6V1M.5 3L3 .500 5.500 3"/></svg><b class="font-semibold ml-auto pr-px">1.1</b><span class="text-[10px] text-[#9b9faa]">K/s</span></div>
    <div class="flex items-center text-xs font-['Open_Sans',sans-serif]"><svg class="size-[6px] shrink-0" viewBox="0 0 6 6" fill="none" stroke="#2fae48" stroke-width="1.500"><path d="M3 0v5M.5 3L3 5.500 5.500 3"/></svg><b class="font-semibold ml-auto pr-px">0</b><span class="text-[10px] text-[#9b9faa]">K/s</span></div>
  </div>
  <div class="absolute right-0 top-0 size-[59px] rounded-full bg-[#565b69] border-2 border-[#3d414d] shadow-md text-white flex items-baseline justify-center font-['Open_Sans',sans-serif] font-light">
    <svg class="absolute inset-0 size-full" viewBox="0 0 55 55" fill="none" stroke-width="2"><defs><linearGradient id="ring" x1="0" y1="0" x2="0" y2="1"><stop offset="0" stop-color="#45d5dd"/><stop offset=".6" stop-color="#7ed79a"/><stop offset="1" stop-color="#e3dc4c"/></linearGradient></defs><path d="M28 3a24.500 24.500 0 1 1-18.500 42" stroke="url(#ring)"/></svg>
    <span class="text-2xl leading-[52px]">63</span><span class="text-xs">%</span>
  </div>
</div>

<!-- Input method bar -->
<div class="fixed right-0 bottom-0 w-[150px] h-[26px] border border-[#b9cbe8] bg-[#fdfdfe] flex items-center pl-[33px] gap-2 text-[#0a6fd8]">
  <b class="text-base leading-5 w-4">中</b>
  <svg class="size-4" viewBox="0 0 16 16" fill="#0a6fd8"><circle cx="4" cy="5" r="2.500"/><path d="M10 8h4q0 5-3 7l-1-1q1.500-1 1.500-3H10z"/></svg>
  <svg class="size-4" viewBox="0 0 16 16" fill="none" stroke="#0a6fd8" stroke-width="2"><rect x="6" y="1" width="4" height="8" rx="2" fill="#0a6fd8"/><path d="M2 7q1 5 6 5t6-5M8 12v3"/></svg>
  <svg class="size-4" viewBox="0 0 16 16" fill="none" stroke="#0a6fd8" stroke-width="1.500"><rect x="1" y="3" width="14" height="11" rx="1"/><path d="M3 6h2M7 6h2M11 6h2M3 8.500h2M7 8.500h2M11 8.500h2M4 11.500h8"/></svg>
  <svg class="size-[14px]" viewBox="0 0 14 14" fill="#0a6fd8"><rect width="6" height="6" rx="2"/><rect x="8" width="6" height="6" rx="2"/><rect y="8" width="6" height="6" rx="2"/><rect x="8" y="8" width="6" height="6" rx="1"/></svg>
</div>

<!-- Site mark -->
<div class="fixed right-[11px] bottom-0 w-[149px] h-[50px] pointer-events-none">
  <svg class="absolute left-0 bottom-0 w-11 h-[50px]" viewBox="0 0 44 50"><path d="M8 27l21-5 3 2 4 18-3 4-21 4-3-2z" fill="#f4511e"/><path d="M28 28l-10 2q-4 1-3 5 1 2 5 1l6-1q4 0 4 4t-4 5l-10 2" fill="none" stroke="#fff" stroke-width="4"/><path d="M40 1Q6 2 1 22q0 10 9 9Q4 18 40 1z" fill="#5b9ddd" opacity=".85"/><path d="M14 22Q8 13 40 1 22 10 20 22z" fill="#8fd0f5"/><path d="M24 13q16-4 16 6 0 12-22 19 18-15 6-25z" fill="#58b97a" opacity=".85"/><path d="M7 38q12 2 24-8-8 12-24 8z" fill="#d6dc3c"/></svg>
  <span class="absolute right-0 top-0 text-[21px] leading-6 font-bold text-[#4c8fd0]/85 whitespace-nowrap">极光下载站</span>
  <span class="absolute right-0 top-[25px] text-base leading-5 font-bold text-[#45b565]/60 font-['Liberation_Sans',sans-serif]">www.xz7.com</span>
</div>

<script>
  const columns = ['A','B','C','D','E','F','G','H','I','J','K',''];
  const rows = [
    [65,66,67,'日期'],[66,67,68,'2023/7/3'],[67,68,69,'2023/7/4'],[68,69,70,'2023/7/5'],
    [69,70,71,'2023/7/6'],[70,71,72,'2023/7/7'],[71,72,73,'2023/7/8']
  ];
  let html = '<colgroup><col class="w-[58px]">' + columns.map(c => c === 'D' ? '<col class="w-[224px]">' : '<col class="w-[126px]">').join('') + '</colgroup>';
  html += '<thead><tr class="h-[39px] text-2xl text-[#10131a] font-[\'Open_Sans\',sans-serif]"><th class="p-0 border-b border-[#a9b1c8] bg-[linear-gradient(to_bottom,transparent,#a9b1c8)] bg-[length:1px_100%] bg-right bg-no-repeat"><svg class="size-5 ml-[29px]" viewBox="0 0 20 20"><path d="M20 0v20H0z" fill="#b9b9b9"/></svg></th>';
  for (const c of columns) {
    html += c === 'F'
      ? '<th scope="col" class="p-0 font-normal text-[#22b97b] bg-[#d2d5dc] border-b-2 border-[#22b97b]">F</th>'
      : `<th scope="col" class="p-0 font-normal border-b border-[#a9b1c8] bg-[linear-gradient(to_bottom,transparent,#a9b1c8)] bg-[length:1px_100%] bg-right bg-no-repeat">${c}</th>`;
  }
  html += '</tr></thead><tbody>';
  for (let r = 1; r <= 25; r++) {
    const label = r < 25 ? r : '';
    html += '<tr class="h-8">' + (r === 10
      ? '<th scope="row" class="p-0 text-2xl leading-[30px] font-normal font-[\'Open_Sans\',sans-serif] text-[#22b97b] bg-[#d2d5dc] border-r-2 border-[#22b97b]">10</th>'
      : `<th scope="row" class="p-0 text-2xl leading-[30px] font-normal font-['Open_Sans',sans-serif] text-[#10131a] border-r border-[#a9b1c8] bg-[linear-gradient(to_right,transparent,#a9b1c8)] bg-[length:100%_1px] bg-bottom bg-no-repeat">${label}</th>`);
    columns.forEach((c, i) => {
      const v = rows[r - 1]?.[i] ?? '';
      if (v === '日期') html += '<td class="py-0 pl-1 bg-white border-r border-b border-[#c1c8da] text-2xl leading-[31px] font-light text-black">日期</td>';
      else if (c === 'F' && r === 10) html += '<td class="p-0 relative bg-white border-r border-b border-[#c1c8da]"><div class="absolute -inset-[2px] border-3 border-[#22b97b]"></div><div class="absolute -right-1 -bottom-1 size-[6px] border-t border-l border-white bg-[#22b97b]"></div></td>';
      else html += `<td class="pt-[2px] pb-0 pr-[3px] bg-white border-r border-b border-[#c1c8da] text-right text-[26px] leading-[29px] text-black font-['Liberation_Serif',serif]">${v}</td>`;
    });
    html += '</tr>';
  }
  document.getElementById('sheet').innerHTML = html + '</tbody>';
</script>
</body>
</html>
